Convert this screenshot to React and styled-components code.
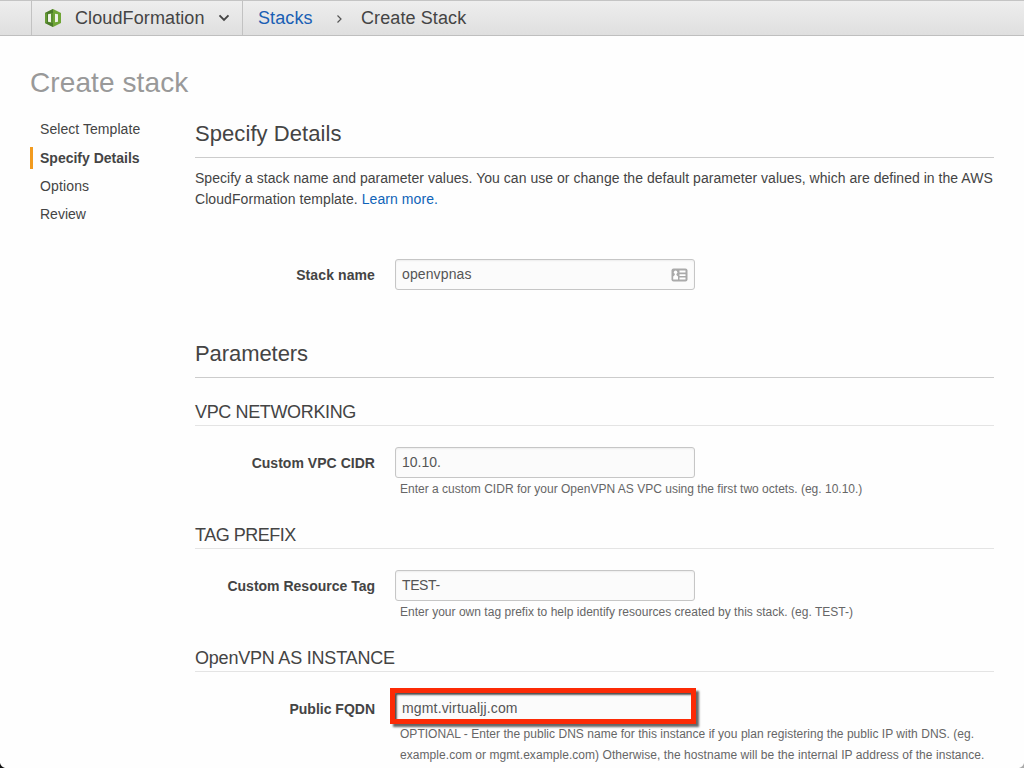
import React from "react";
import styled, { createGlobalStyle } from "styled-components";

const Global = createGlobalStyle`
  * { box-sizing: border-box; }
  html, body { margin: 0; background: #fff; }
  body { font: 14px/21px "Liberation Sans", Arial, sans-serif; color: #444; overflow: hidden; }
`;

const Page = styled.div`
  position: relative;
  width: 1024px;
  height: 768px;
  overflow: hidden;
  background: #fefefe;
`;

const TopBar = styled.header`
  display: flex;
  height: 36px;
  padding-left: 31px;
  border-top: 1px solid #c4c4c4;
  border-bottom: 1px solid #bfbfbf;
  background: linear-gradient(#eeeeee, #dfdfdf);
  font-size: 18px;
  line-height: 34px;
`;

const Service = styled.div`
  display: flex;
  align-items: center;
  width: 212px;
  padding-left: 13px;
  border-left: 1px solid #c2c2c2;
  border-right: 1px solid #c2c2c2;
`;

const ServiceName = styled.span`
  margin-left: 14px;
  width: 130px;
  white-space: nowrap;
  letter-spacing: 0.11px;
`;

const ServiceArrow = styled.svg`
  margin-left: 13px;
`;

const Crumbs = styled.nav`
  display: flex;
  align-items: center;
  padding-left: 15px;
  letter-spacing: 0.1px;
`;

const CrumbLink = styled.a`
  width: 56px;
  color: #1a5fb4;
`;

const CrumbArrow = styled.svg`
  margin: 2px 18px 0 22px;
`;

const Title = styled.h1`
  margin: 31px 0 0 30px;
  font-size: 28px;
  line-height: 32px;
  font-weight: 400;
  letter-spacing: 0.1px;
  color: #999;
`;

const Columns = styled.div`
  display: flex;
  padding: 19px 30px 0;
`;

const Steps = styled.ul`
  list-style: none;
  width: 165px;
  margin: 0;
  padding: 0;
`;

const Step = styled.li`
  height: 22px;
  line-height: 22px;
  margin-bottom: ${(p) => p.$gap || 6}px;
  padding-left: ${(p) => (p.$active ? 7 : 10)}px;
  border-left: ${(p) => (p.$active ? "3px solid #f29b1f" : "none")};
  font-weight: ${(p) => (p.$active ? 700 : 400)};
  letter-spacing: ${(p) => p.$ls || 0}px;
`;

const Content = styled.main`
  width: 799px;
`;

const Heading = styled.h2`
  height: 40px;
  margin: ${(p) => p.$top || 0}px 0 0;
  border-bottom: 1px solid #ccc;
  font-size: 22px;
  line-height: 32px;
  font-weight: 400;
  letter-spacing: ${(p) => p.$ls || 0}px;
`;

const Intro = styled.p`
  margin: 10px 0 49px;
  white-space: nowrap;
`;

const Line = styled.span`
  display: block;
  letter-spacing: ${(p) => p.$ls || 0}px;
`;

const Link = styled.a`
  color: #0f63b8;
`;

const Group = styled.section`
  height: 123px;
  margin-top: ${(p) => p.$top || 0}px;
`;

const GroupTitle = styled.h3`
  height: 25px;
  margin: 0 0 21px;
  border-bottom: 1px solid #e4e4e4;
  font-size: 18px;
  line-height: 22px;
  font-weight: 400;
  letter-spacing: ${(p) => p.$ls || 0}px;
`;

const Row = styled.div`
  display: grid;
  grid-template-columns: 180px 300px;
  column-gap: 20px;
  align-items: center;
`;

const Label = styled.label`
  padding-top: 1px;
  line-height: 22px;
  text-align: right;
  font-weight: 700;
  letter-spacing: ${(p) => p.$ls || 0}px;
`;

const Field = styled.div`
  display: flex;
  position: relative;
  align-items: center;
  justify-content: space-between;
  height: 31px;
  padding: 0 6px 1px;
  border: 1px solid #c6c6c6;
  border-radius: 3px;
  background: #fbfbfb;
  box-shadow: inset 0 1px 2px rgba(0, 0, 0, 0.06);
  color: #555;
  letter-spacing: ${(p) => p.$ls || 0}px;
`;

const Highlight = styled.span`
  position: absolute;
  left: -6px;
  top: -6px;
  width: 306px;
  height: 36px;
  border: 5px solid #fc2a05;
  box-shadow: 3px 3px 2px rgba(0, 0, 0, 0.6), inset 2px 2px 2px rgba(0, 0, 0, 0.6);
`;

const Help = styled.p`
  margin: ${(p) => p.$top || 0}px 0 0 205px;
  font-size: 12px;
  line-height: 21px;
  color: #666;
  white-space: nowrap;
`;

const Corner = styled.svg`
  position: absolute;
  bottom: 0;
  ${(p) => (p.$right ? "right: 0;" : "left: 0;")}
`;

const CardSvg = styled.svg`
  margin-top: 2px;
`;

function Logo() {
  return (
    <svg width="16" height="18" viewBox="0 0 16 18">
      <path d="M0 4 8 0l8 4v10l-8 4-8-4z" fill="#6fa536" />
      <path d="M0 4 8 0v4.200L3.500 4.800v8.400l4.500.6V18l-8-4z" fill="#4b7a2b" />
      <path d="M0 4 2 4.600v8.800L0 14z" fill="#669b34" />
      <path d="M3 5.200 6 4.700v8.600l-3-.5z" fill="#eef2e8" />
      <path d="M10 4.700l3 .5v7.600l-3 .5z" fill="#eef2e8" />
      <path d="M6 4.700 8 4.300v9.400l-2-.4z" fill="#5c9031" />
    </svg>
  );
}

function CardIcon() {
  return (
    <CardSvg width="17" height="14" viewBox="0 0 17 14">
      <rect x=".5" y=".5" width="16" height="13" rx="2" fill="#aaa" />
      <circle cx="4.600" cy="4.300" r="1.700" fill="#fff" />
      <path d="M3.800 5h1.600v2l1.600 1.500V11.500H2.200V8.500L3.800 7z" fill="#fff" />
      <path d="M8.500 2.600h6v2h-6zM8.500 6.200h6v1.800h-6zM8.500 9.600h6v1.800h-6z" fill="#fff" />
    </CardSvg>
  );
}

export default function App() {
  return (
    <Page>
      <Global />
      <TopBar>
        <Service>
          <Logo />
          <ServiceName>CloudFormation</ServiceName>
          <ServiceArrow width="12" height="8" viewBox="0 0 12 8">
            <path d="M1.500 1.300 6 5.800l4.500-4.500" fill="none" stroke="#444" strokeWidth="1.900" />
          </ServiceArrow>
        </Service>
        <Crumbs>
          <CrumbLink>Stacks</CrumbLink>
          <CrumbArrow width="7" height="10" viewBox="0 0 7 10">
            <path d="M1.500 1.500 5 5 1.500 8.500" fill="none" stroke="#555" strokeWidth="1.200" />
          </CrumbArrow>
          <span>Create Stack</span>
        </Crumbs>
      </TopBar>
      <Title>Create stack</Title>
      <Columns>
        <Steps>
          <Step $gap={7} $ls={0.06}>Select Template</Step>
          <Step $active>Specify Details</Step>
          <Step $ls={0.14}>Options</Step>
          <Step>Review</Step>
        </Steps>
        <Content>
          <Heading $ls={0.07}>Specify Details</Heading>
          <Intro>
            <Line $ls={0.03}>Specify a stack name and parameter values. You can use or change the default parameter values, which are defined in the AWS</Line>
            <Line $ls={0.07}>CloudFormation template. <Link>Learn more.</Link></Line>
          </Intro>
          <Row>
            <Label $ls={0.1}>Stack name</Label>
            <Field $ls={0.12}>openvpnas<CardIcon /></Field>
          </Row>
          <Heading $top={48} $ls={-0.07}>Parameters</Heading>
          <Group $top={23}>
            <GroupTitle $ls={-0.36}>VPC NETWORKING</GroupTitle>
            <Row>
              <Label $ls={0.03}>Custom VPC CIDR</Label>
              <Field>10.10.</Field>
            </Row>
            <Help $top={1}><Line $ls={0.01}>Enter a custom CIDR for your OpenVPN AS VPC using the first two octets. (eg. 10.10.)</Line></Help>
          </Group>
          <Group>
            <GroupTitle $ls={-0.5}>TAG PREFIX</GroupTitle>
            <Row>
              <Label>Custom Resource Tag</Label>
              <Field $ls={-0.4}>TEST-</Field>
            </Row>
            <Help $top={1}><Line $ls={0.02}>Enter your own tag prefix to help identify resources created by this stack. (eg. TEST-)</Line></Help>
          </Group>
          <Group>
            <GroupTitle $ls={-0.21}>OpenVPN AS INSTANCE</GroupTitle>
            <Row>
              <Label>Public FQDN</Label>
              <Field $ls={0.16}>mgmt.virtualjj.com<Highlight /></Field>
            </Row>
            <Help>
              <Line $ls={0.03}>OPTIONAL - Enter the public DNS name for this instance if you plan registering the public IP with DNS. (eg.</Line>
              <Line $ls={0.055}>example.com or mgmt.example.com) Otherwise, the hostname will be the internal IP address of the instance.</Line>
            </Help>
          </Group>
        </Content>
      </Columns>
      <Corner width="5" height="5" viewBox="0 0 5 5"><path d="M0 0Q1 4 5 5H0z" fill="#111" /></Corner>
      <Corner $right width="5" height="5" viewBox="0 0 5 5"><path d="M5 0Q4 4 0 5H5z" fill="#aaa" /></Corner>
    </Page>
  );
}
